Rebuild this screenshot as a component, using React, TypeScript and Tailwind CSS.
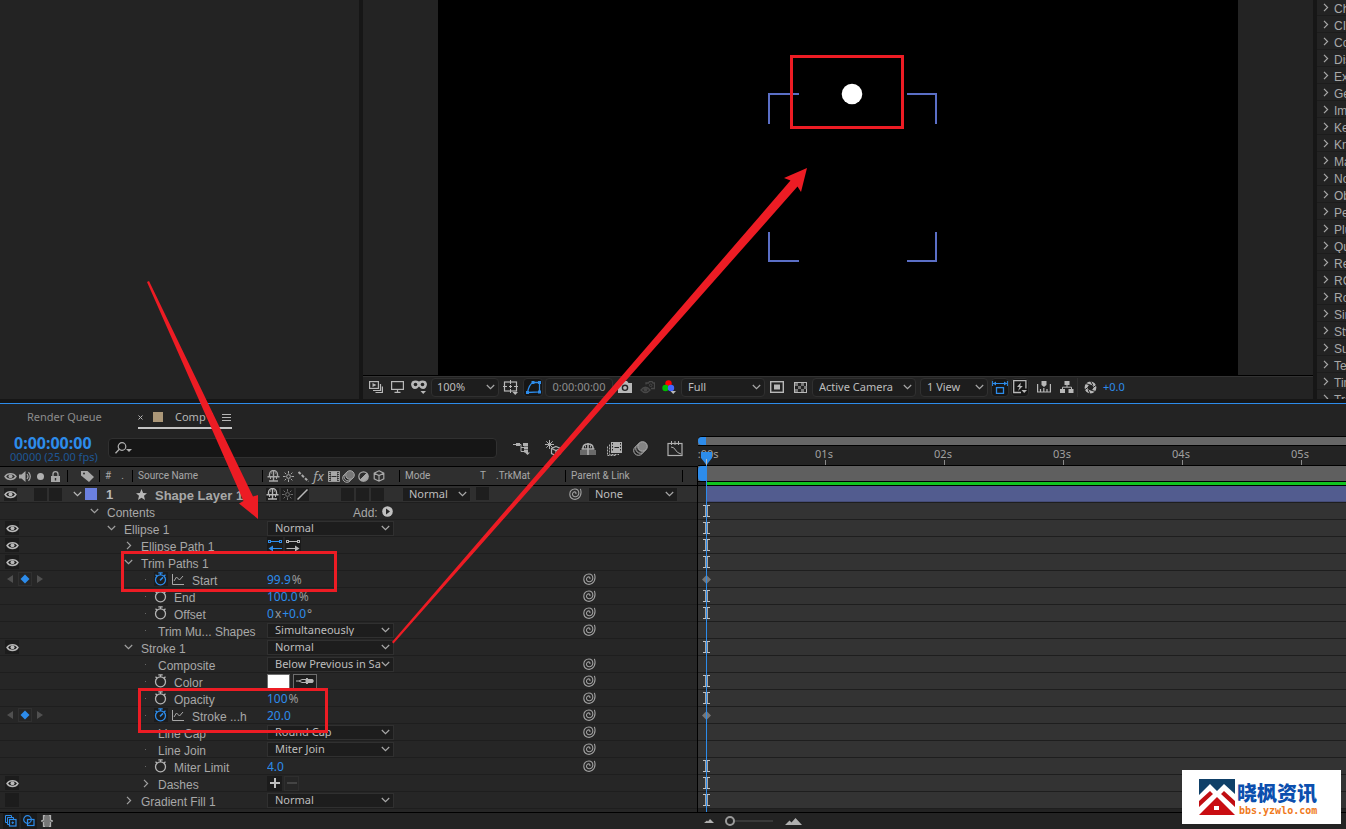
import { useState } from 'react'
import type { ReactNode } from 'react'
import clsx from 'clsx'

interface Row {
  label: string
  level: number
  kind: 'group' | 'prop'
  open?: boolean
  eye?: boolean | 'off'
  watch?: boolean
  animated?: boolean
  whip?: boolean
  mark?: 'beam' | 'key'
  value?: ReactNode
}

const effects = [
  'Channel',
  'CINEMA 4D',
  'Color Correction',
  'Distort',
  'Expression Controls',
  'Generate',
  'Immersive Video',
  'Keying',
  'Knoll',
  'Matte',
  'Noise & Grain',
  'Obsolete',
  'Perspective',
  'Plugins',
  'Quick Tools',
  'Red Giant',
  'RG Magic Bullet',
  'Rowbyte',
  'Simulation',
  'Stylize',
  'Superluminal',
  'Text',
  'Time',
  'Transition',
]

const seconds = ['0:00s', '01s', '02s', '03s', '04s', '05s', '06s']

const indent = ['pl-0', 'pl-[17px]', 'pl-[34px]', 'pl-[51px]']

/* ---------- small pieces ---------- */

function Svg({ w, h, children, className }: { w: number; h: number; children: ReactNode; className?: string }) {
  return (
    <svg
      width={w}
      height={h}
      viewBox={`0 0 ${w} ${h}`}
      fill="none"
      stroke="currentColor"
      className={clsx('shrink-0', className)}
      aria-hidden="true"
    >
      {children}
    </svg>
  )
}

function Chevron({ open = true }: { open?: boolean }) {
  return open ? (
    <Svg w={9} h={6}>
      <path d="M.8 1l3.7 3.6L8.2 1" strokeWidth="1.2" />
    </Svg>
  ) : (
    <Svg w={6} h={9}>
      <path d="M1 .8l3.6 3.7L1 8.2" strokeWidth="1.2" />
    </Svg>
  )
}

function Eye() {
  return (
    <Svg w={13} h={9}>
      <path d="M1 4.5C3.5 0.6 9.5 0.6 12 4.5C9.5 8.4 3.5 8.4 1 4.5Z" strokeWidth="1.4" />
      <circle cx="6.5" cy="4.3" r="2" fill="currentColor" stroke="none" />
    </Svg>
  )
}

function Spiral() {
  return (
    <Svg w={13} h={12}>
      <path
        d="M11.4 .8C12.4 4 12 8.2 9.2 10.3C6.2 12.4 1 11.2 .8 6.4C.7 3 3 1 5.9 1C8.4 1 9.9 2.9 9.8 5.2C9.7 7.5 8 8.8 6.2 8.7C4.4 8.6 3.4 7.4 3.5 6C3.6 4.5 4.8 3.7 5.9 3.9C6.9 4.1 7.2 5 6.8 6.2"
        strokeWidth="1.1"
      />
    </Svg>
  )
}

function Stopwatch({ active }: { active?: boolean }) {
  return (
    <Svg w={13} h={14}>
      <circle cx="6.5" cy="7.8" r="5" strokeWidth="1.3" />
      <path d="M4.3 .9h4.400M6.500 1v2M1.500 2.800l1.500 1.200M11.500 2.800L10 4" strokeWidth="1.300" />
      {active && <path d="M6 8.400L9 5.400" strokeWidth="1.500" />}
    </Svg>
  )
}

function Shy() {
  return (
    <Svg w={13} h={12}>
      <path d="M2.500 6.500V4.500a4 4 0 0 1 8 0v2" strokeWidth="1.400" />
      <path d="M.5 6.700h12M6.500 1v10M2 11h9" strokeWidth="1.400" />
      <path d="M4.500 2.500v1M8.500 2.500v1M3.500 7v2M9.500 7v2" />
    </Svg>
  )
}

function Sun() {
  return (
    <Svg w={11} h={11}>
      <circle cx="5.5" cy="5.5" r="1.9" />
      <path d="M5.5 0v2.6M5.5 8.4V11M0 5.5h2.6M8.4 5.5H11M1.6 1.6l1.6 1.6M7.8 7.8l1.6 1.6M9.4 1.6L7.8 3.2M3.2 7.8L1.6 9.4" />
    </Svg>
  )
}

function Film() {
  return (
    <Svg w={12} h={11}>
      <rect x=".6" y=".6" width="10.8" height="9.8" />
      <rect x="3" y="1" width="6" height="9" fill="currentColor" stroke="none" />
      <path d="M1 2.5h1.5M1 4.5h1.5M1 6.5h1.5M1 8.5h1.5M9.5 2.5H11M9.5 4.5H11M9.5 6.5H11M9.5 8.5H11" />
      <path d="M3.5 5.5h5" stroke="#2f2f2f" />
    </Svg>
  )
}

function Blur() {
  return (
    <Svg w={13} h={13}>
      <circle cx="5" cy="8" r="4.3" />
      <circle cx="6.3" cy="6.6" r="4.3" fill="#2f2f2f" />
      <circle cx="8" cy="5" r="4.3" fill="#777" />
    </Svg>
  )
}

function Cube() {
  return (
    <Svg w={12} h={12}>
      <path d="M6 .8l4.8 2.4v5.6L6 11.2 1.2 8.8V3.2zM1.2 3.2L6 5.6l4.8-2.4M6 5.6v5.6" strokeWidth="1.2" />
    </Svg>
  )
}

function Drop({ label, options, width, className }: { label: string; options: string[]; width: string; className?: string }) {
  return (
    <div className={clsx('relative shrink-0', width)}>
      <select
        aria-label={label}
        className={clsx(
          'block w-full appearance-none overflow-hidden border border-[#303030] bg-[#1d1d1d] pr-3 text-[11px] leading-3 text-[#bdbdbd] outline-none',
          className,
        )}
      >
        {options.map((o) => (
          <option key={o}>{o}</option>
        ))}
      </select>
      <span className="pointer-events-none absolute inset-y-0 right-1 flex items-center text-[#a8a8a8]">
        <Chevron />
      </span>
    </div>
  )
}

function RowDrop({ label, options }: { label: string; options: string[] }) {
  return <Drop label={label} options={options} width="w-[127px]" className="h-[15px] pl-[7px]" />
}

function Num({ label, value, unit }: { label: string; value: string; unit?: string }) {
  const [v, setV] = useState(value)
  return (
    <label className="flex items-center gap-px pt-px text-[12px] leading-4 text-[#9a9a9a]">
      <input
        aria-label={label}
        value={v}
        onChange={(e) => setV(e.target.value)}
        className="field-sizing-content h-4 bg-transparent text-[#2d8ceb] outline-none"
      />
      {unit}
    </label>
  )
}

function Sep() {
  return <i className="h-3 w-px shrink-0 bg-black" />
}

function Slot({ w, children }: { w: string; children: ReactNode }) {
  return <span className={clsx('flex shrink-0 items-center justify-center', w)}>{children}</span>
}

function ToolButton({ label, w, active, children }: { label: string; w: string; active?: boolean; children: ReactNode }) {
  return (
    <button
      type="button"
      aria-label={label}
      className={clsx(
        'flex h-[19px] shrink-0 items-center justify-center',
        w,
        active && 'rounded-sm border border-[#2e2e2e] bg-[#161616]',
      )}
    >
      {children}
    </button>
  )
}

/* ---------- layer properties ---------- */

const rows: Row[] = [
  {
    label: 'Contents',
    level: 0,
    kind: 'group',
    open: true,
    mark: 'beam',
    value: (
      <button
        type="button"
        className="ml-[86px] flex items-center gap-1 font-['Liberation_Sans',sans-serif] text-[12px] leading-[14px] text-[#a8a8a8]"
      >
        <span className="pt-[3px]">Add:</span>
        <Svg w={11} h={11} className="text-[#c0c0c0]">
          <circle cx="5.5" cy="5.5" r="5.3" fill="currentColor" stroke="none" />
          <path d="M4 2.6v5.8L8 5.5z" fill="#262626" stroke="none" />
        </Svg>
      </button>
    ),
  },
  {
    label: 'Ellipse 1',
    level: 1,
    kind: 'group',
    open: true,
    eye: true,
    mark: 'beam',
    value: <RowDrop label="Ellipse mode" options={['Normal', 'Multiply', 'Screen']} />,
  },
  {
    label: 'Ellipse Path 1',
    level: 2,
    kind: 'group',
    open: false,
    eye: true,
    mark: 'beam',
    value: (
      <div className="flex gap-0.5">
        <button type="button" aria-label="Path direction normal" className="h-4 w-4 bg-[#1a1a1a] text-[#2d8ceb]">
          <Svg w={16} h={13}>
            <path d="M3 2.5h10M3 9.5h12" />
            <path d="M6 6.500L1.500 9.500 6 12.500z" fill="currentColor" stroke="none" />
            <rect x="1.5" y="1.5" width="2" height="2" />
            <rect x="12.5" y="1.5" width="2" height="2" />
          </Svg>
        </button>
        <button type="button" aria-label="Path direction reversed" className="h-4 w-4 bg-[#1a1a1a] text-[#b5b5b5]">
          <Svg w={16} h={13}>
            <path d="M3 2.5h10M1.5 9.5H13" />
            <path d="M10 6.500l4.500 3-4.500 3z" fill="currentColor" stroke="none" />
            <rect x="1.5" y="1.5" width="2" height="2" />
            <rect x="12.5" y="1.5" width="2" height="2" />
          </Svg>
        </button>
      </div>
    ),
  },
  { label: 'Trim Paths 1', level: 2, kind: 'group', open: true, eye: true, mark: 'beam' },
  {
    label: 'Start',
    level: 3,
    kind: 'prop',
    watch: true,
    animated: true,
    whip: true,
    mark: 'key',
    value: <Num label="Start" value="99.9" unit="%" />,
  },
  {
    label: 'End',
    level: 3,
    kind: 'prop',
    watch: true,
    whip: true,
    mark: 'beam',
    value: <Num label="End" value="100.0" unit="%" />,
  },
  {
    label: 'Offset',
    level: 3,
    kind: 'prop',
    watch: true,
    whip: true,
    mark: 'beam',
    value: (
      <div className="flex gap-px">
        <Num label="Offset turns" value="0" unit="x" />
        <Num label="Offset degrees" value="+0.0" unit="°" />
      </div>
    ),
  },
  {
    label: 'Trim Mu... Shapes',
    level: 3,
    kind: 'prop',
    whip: true,
    value: <RowDrop label="Trim Multiple Shapes" options={['Simultaneously', 'Individually']} />,
  },
  {
    label: 'Stroke 1',
    level: 2,
    kind: 'group',
    open: true,
    eye: true,
    mark: 'beam',
    value: <RowDrop label="Stroke mode" options={['Normal', 'Multiply', 'Screen']} />,
  },
  {
    label: 'Composite',
    level: 3,
    kind: 'prop',
    whip: true,
    value: <RowDrop label="Composite" options={['Below Previous in Sa', 'Above Previous in Sa']} />,
  },
  {
    label: 'Color',
    level: 3,
    kind: 'prop',
    watch: true,
    whip: true,
    mark: 'beam',
    value: (
      <div className="flex gap-[3px]">
        <button type="button" aria-label="Stroke color" className="h-[15px] w-[23px] border border-[#6e6e6e] bg-white" />
        <button
          type="button"
          aria-label="Pick color"
          className="flex h-[15px] w-6 items-center justify-center border border-[#6e6e6e] bg-[#1d1d1d] text-[#b5b5b5]"
        >
          <Svg w={20} h={8}>
            <path d="M1 4h3M4 4l3-1.5h4v3H7z" />
            <path d="M11 1h2v1h4.500Q20 4 17.500 6H13v1h-2z" fill="currentColor" stroke="none" />
          </Svg>
        </button>
      </div>
    ),
  },
  {
    label: 'Opacity',
    level: 3,
    kind: 'prop',
    watch: true,
    whip: true,
    mark: 'beam',
    value: <Num label="Opacity" value="100" unit="%" />,
  },
  {
    label: 'Stroke ...h',
    level: 3,
    kind: 'prop',
    watch: true,
    animated: true,
    whip: true,
    mark: 'key',
    value: <Num label="Stroke Width" value="20.0" />,
  },
  {
    label: 'Line Cap',
    level: 3,
    kind: 'prop',
    whip: true,
    value: <RowDrop label="Line Cap" options={['Round Cap', 'Butt Cap', 'Projecting Cap']} />,
  },
  {
    label: 'Line Join',
    level: 3,
    kind: 'prop',
    whip: true,
    value: <RowDrop label="Line Join" options={['Miter Join', 'Round Join', 'Bevel Join']} />,
  },
  {
    label: 'Miter Limit',
    level: 3,
    kind: 'prop',
    watch: true,
    whip: true,
    mark: 'beam',
    value: <Num label="Miter Limit" value="4.0" />,
  },
  {
    label: 'Dashes',
    level: 3,
    kind: 'group',
    open: false,
    eye: true,
    mark: 'beam',
    value: (
      <div className="flex gap-0.5">
        <button type="button" aria-label="Add dash" className="flex h-[15px] w-[15px] items-center justify-center bg-[#1b1b1b] text-[#c0c0c0]">
          <Svg w={10} h={10}>
            <path d="M5 0v10M0 5h10" strokeWidth="2" />
          </Svg>
        </button>
        <button
          type="button"
          aria-label="Remove dash"
          className="flex h-[15px] w-[15px] items-center justify-center border border-[#2e2e2e] text-[#444]"
        >
          <Svg w={10} h={10}>
            <path d="M0 5h10" strokeWidth="2" />
          </Svg>
        </button>
      </div>
    ),
  },
  {
    label: 'Gradient Fill 1',
    level: 2,
    kind: 'group',
    open: false,
    eye: 'off',
    mark: 'beam',
    value: <RowDrop label="Gradient mode" options={['Normal', 'Multiply', 'Screen']} />,
  },
]

function PropertyRow({ row }: { row: Row }) {
  return (
    <div className="flex h-[17px] items-center border-b border-[#1e1e1e] bg-[#262626]">
      <div className="flex w-[88px] shrink-0 items-center pl-[5px]">
        {row.eye && (
          <button
            type="button"
            aria-label={`Toggle ${row.label}`}
            className="flex h-[14px] w-[14px] items-center justify-center bg-[#1c1c1c] text-[#b8b8b8]"
          >
            {row.eye === true && <Eye />}
          </button>
        )}
        {row.animated && (
          <div className="flex items-center gap-1 pl-px text-[#505050]">
            <Svg w={8} h={8}>
              <path d="M7 0v8L1 4z" fill="currentColor" stroke="none" />
            </Svg>
            <span className="flex h-[14px] w-[14px] items-center justify-center border border-[#303030] text-[#2d8ceb]">
              <Svg w={10} h={10}>
                <path d="M5 .5L9.500 5 5 9.500.5 5z" fill="currentColor" stroke="none" />
              </Svg>
            </span>
            <Svg w={8} h={8}>
              <path d="M1 0v8l6-4z" fill="currentColor" stroke="none" />
            </Svg>
          </div>
        )}
      </div>
      <div className={clsx('flex w-[179px] shrink-0 items-center', indent[row.level])}>
        <span className="flex w-[13px] shrink-0 items-center justify-center text-[#a0a0a0]">
          {row.kind === 'group' ? <Chevron open={row.open} /> : <i className="h-px w-px bg-[#666]" />}
        </span>
        {row.watch && (
          <span className={clsx('ml-0.5 w-[14px] shrink-0', row.animated ? 'bg-[#1c1c1c] text-[#2d8ceb]' : 'text-[#b5b5b5]')}>
            <Stopwatch active={row.animated} />
          </span>
        )}
        {row.animated && (
          <Svg w={12} h={11} className="ml-1 text-[#a8a8a8]">
            <path d="M.5 0v10.500H12M2 7l2.500-4 3 3L11 2" />
          </Svg>
        )}
        <span
          className={clsx(
            "whitespace-nowrap pt-[3px] font-['Liberation_Sans',sans-serif] text-[12px] leading-[14px] text-[#a8a8a8]",
            row.animated ? 'ml-2' : 'ml-1.5',
          )}
        >
          {row.label}
        </span>
      </div>
      <div className="w-[316px] shrink-0">{row.value}</div>
      {row.whip && (
        <span className="text-[#a0a0a0]">
          <Spiral />
        </span>
      )}
    </div>
  )
}

function TrackRow({ mark }: { mark?: 'beam' | 'key' }) {
  return (
    <div className="flex h-[17px] items-center border-b border-[#1e1e1e] bg-[#333333] pl-1">
      {mark === 'beam' && (
        <Svg w={9} h={12}>
          <path d="M1 .5h7M1 11.500h7" stroke="#c0c0c0" />
          <path d="M4.500 1v10" stroke="#a8a8a8" strokeWidth="3" />
        </Svg>
      )}
      {mark === 'key' && (
        <Svg w={9} h={9}>
          <path d="M4.500 0l4.500 4.500-4.500 4.500L0 4.500z" fill="#777" stroke="none" />
        </Svg>
      )}
    </div>
  )
}

/* ---------- viewer ---------- */

function Viewer() {
  return (
    <section className="flex min-w-0 flex-1 flex-col bg-[#232323]">
      <div className="flex flex-1 justify-center border-b border-black">
        <svg viewBox="0 0 800 375" className="h-[375px] w-[800px] bg-black" aria-label="Composition preview">
          <g fill="none" stroke="#5b6fc6" strokeWidth="2">
            <path d="M331 124V94H361M469 94H498V124M331 232V261H361M469 261H498V232" />
          </g>
          <circle cx="414" cy="94" r="10.300" fill="#fff" />
        </svg>
      </div>
      <div className="flex h-6 items-center border-t border-[#333] pb-0.5 pl-1 text-[#b8b8b8]">
        <Slot w="w-[18px]">
          <Svg w={14} h={12}>
            <rect x=".6" y=".6" width="8.800" height="6.800" strokeWidth="1.200" />
            <path d="M3.500 2v4L7.500 4z" fill="currentColor" stroke="none" />
            <path d="M11.500 3v6.500H4M13.400 5.500v6H6.500" strokeWidth="1.200" />
          </Svg>
        </Slot>
        <Slot w="w-6">
          <Svg w={13} h={12}>
            <rect x=".6" y=".6" width="11.800" height="7.800" strokeWidth="1.200" />
            <path d="M6.500 8.500v2.500M3.500 11.400h6" strokeWidth="1.200" />
          </Svg>
        </Slot>
        <Slot w="w-5">
          <Svg w={16} h={14}>
            <path
              d="M1 1.500Q4.500-.3 8 1.500Q11.500-.3 15 1.500L16 4Q15.500 9 12 9Q10 9 8 6.500Q6 9 4 9Q.5 9 0 4z"
              fill="currentColor"
              stroke="none"
            />
            <circle cx="4.500" cy="4.500" r="1.800" fill="#232323" stroke="none" />
            <circle cx="11.500" cy="4.500" r="1.800" fill="#232323" stroke="none" />
            <path d="M9.500 11h5.500L12.200 14z" fill="currentColor" stroke="none" />
          </Svg>
        </Slot>
        <div className="ml-0.5">
          <Drop label="Magnification" options={['100%', '50%', '25%']} width="w-[68px]" className="h-[19px] rounded-sm pl-[5px]" />
        </div>
        <Slot w="w-6">
          <Svg w={16} h={15}>
            <rect x="1.500" y="2" width="12" height="9" strokeWidth="1.200" />
            <path d="M7.500 0v4M7.500 9v4M0 6.500h4M11 6.500h4M7.500 5v3M6 6.500h3" />
            <path d="M9.500 12h5.500L12.200 15z" fill="currentColor" stroke="none" />
          </Svg>
        </Slot>
        <ToolButton label="Toggle mask and shape path visibility" w="w-5" active>
          <Svg w={15} h={13} className="text-[#2d8ceb]">
            <path d="M1.500 11.500Q3 3.500 7 1.500H13.500v9.500z" strokeWidth="1.300" />
            <path d="M0 10h3v3H0zM5.500 0h3v3h-3zM12 0h3v3h-3zM12 9.500h3v3h-3z" fill="currentColor" stroke="none" />
          </Svg>
        </ToolButton>
        <button
          type="button"
          className="ml-0.5 h-[19px] w-[68px] shrink-0 rounded-sm border border-[#303030] bg-[#1f1f1f] text-[11px] leading-4 text-[#8e8e8e]"
        >
          0:00:00:00
        </button>
        <Slot w="w-6">
          <Svg w={14} h={12}>
            <path d="M0 2h3.500L5 0h4l1.500 2H14v10H0z" fill="currentColor" stroke="none" />
            <circle cx="7" cy="6.800" r="2.600" stroke="#232323" strokeWidth="1.400" />
          </Svg>
        </Slot>
        <Slot w="w-5">
          <Svg w={15} h={13} className="text-[#484848]">
            <path d="M1 9Q5.500 3.500 10 9Q5.500 14 1 9z" strokeWidth="1.300" />
            <circle cx="5.500" cy="8.500" r="1.600" fill="currentColor" />
            <path d="M6 3.500V2h2.500l1-1.500h2.500L13 2h1.500v5.500H11" strokeWidth="1.300" />
            <circle cx="10.700" cy="4.300" r="1.300" />
          </Svg>
        </Slot>
        <Slot w="w-6">
          <Svg w={14} h={14}>
            <circle cx="6.500" cy="3.500" r="3.200" fill="#f00" stroke="none" />
            <circle cx="3.500" cy="8" r="3.200" fill="#0b0" stroke="none" />
            <circle cx="9" cy="8" r="3.200" fill="#46f" stroke="none" />
            <path d="M8.500 11H14l-2.800 3z" fill="currentColor" stroke="none" />
          </Svg>
        </Slot>
        <Drop label="Resolution" options={['Full', 'Half', 'Third', 'Quarter']} width="w-[84px]" className="h-[19px] rounded-sm pl-1.5" />
        <Slot w="w-6">
          <Svg w={14} h={12}>
            <rect x=".7" y=".7" width="12.600" height="10.600" strokeWidth="1.400" />
            <rect x="4" y="3.500" width="6" height="5" fill="currentColor" stroke="none" />
          </Svg>
        </Slot>
        <Slot w="w-[22px]">
          <Svg w={13} h={11}>
            <rect x=".5" y=".5" width="12" height="10" />
            <path d="M1 1h3v3H1zM7 1h3v3H7zM4 4h3v3H4zM10 4h2.500v3H10zM1 7h3v3H1zM7 7h3v3H7z" fill="#777" stroke="none" />
          </Svg>
        </Slot>
        <div className="ml-px flex gap-1">
          <Drop label="3D view" options={['Active Camera', 'Front', 'Left', 'Top']} width="w-[104px]" className="h-[19px] rounded-sm pl-1.5" />
          <Drop label="View layout" options={['1 View', '2 Views', '4 Views']} width="w-[68px]" className="h-[19px] rounded-sm pl-1.5" />
        </div>
        <div className="ml-[3px] flex gap-0.5">
          <ToolButton label="Pixel aspect ratio correction" w="w-[18px]" active>
            <Svg w={16} h={13} className="text-[#2d8ceb]">
              <path d="M1 2.500h14M.6 0v5M15.400 0v5" />
              <path d="M1 2.500L4 .5v4zM15 2.500l-3-2v4z" fill="currentColor" stroke="none" />
              <rect x="4.500" y="6.600" width="7" height="5.800" strokeWidth="1.300" />
            </Svg>
          </ToolButton>
          <ToolButton label="Fast previews" w="w-[18px]" active>
            <Svg w={14} h={14}>
              <path d="M8 12.500H.7V.7h12.200V8.500" strokeWidth="1.300" />
              <path d="M7.800 2.500L4 7h2.500L5 11l4.800-5H7.300z" fill="currentColor" stroke="none" />
              <path d="M8.500 10H14L11.200 13z" fill="currentColor" stroke="none" />
            </Svg>
          </ToolButton>
        </div>
        <Slot w="w-[30px]">
          <Svg w={14} h={12}>
            <path d="M.6 3v8h12.800V3M3.500 8v3M6.800 7v4M10 8v3" strokeWidth="1.200" />
            <path d="M4.500 0h5v4L7 6 4.500 4z" fill="currentColor" stroke="none" />
          </Svg>
        </Slot>
        <Slot w="w-4">
          <Svg w={14} h={12}>
            <path d="M7 3v3M2.500 9V6.200h9V9" />
            <path d="M4.500 0h5v4h-5zM0 8h5v4H0zM8.500 8h5v4h-5z" fill="currentColor" stroke="none" />
          </Svg>
        </Slot>
        <i className="ml-0.5 h-[19px] w-px bg-[#303030]" />
        <Slot w="w-6">
          <Svg w={13} h={13}>
            <circle cx="6.500" cy="6.500" r="4.300" strokeWidth="3.200" />
            <path
              d="M6.500 0L9 4.500M12.500 4L8.500 7M11.500 10.500L6.500 9M6 13L4 8.500M.5 9L4.500 6M1.500 2.500L6.500 4"
              stroke="#232323"
            />
          </Svg>
        </Slot>
        <button type="button" className="ml-px text-[11px] leading-4 text-[#2d8ceb]">
          +0.0
        </button>
      </div>
    </section>
  )
}

function EffectsList() {
  return (
    <aside className="h-full w-[29px] shrink-0 overflow-hidden bg-[#232323]">
      <ul className="-mt-px">
        {effects.map((name) => (
          <li
            key={name}
            className="flex h-[17px] items-center gap-[5px] overflow-hidden whitespace-nowrap border-b border-[#1c1c1c] pl-1.5 font-['Liberation_Sans',sans-serif] text-[12px] leading-[14px] text-[#a8a8a8]"
          >
            <Chevron open={false} />
            <span className="pt-[3px]">{name}</span>
          </li>
        ))}
      </ul>
    </aside>
  )
}

/* ---------- timeline ---------- */

function TimelineControls() {
  return (
    <div className="flex h-[35px] items-start">
      <div className="w-[108px] shrink-0 pl-2.5 pt-1">
        <div className="pl-1 text-[16px] font-bold leading-4 text-[#2d8ceb]">0:00:00:00</div>
        <div className="whitespace-nowrap text-[11px] leading-3 text-[#1e5796]">00000 (25.00 fps)</div>
      </div>
      <label className="mt-[7px] flex h-5 w-[389px] shrink-0 items-center rounded-sm border border-[#303030] bg-[#161616] pl-1.5 text-[#b0b0b0]">
        <Svg w={17} h={12}>
          <circle cx="7" cy="4.500" r="3.800" strokeWidth="1.200" />
          <path d="M4.300 7.300L.5 11.300" strokeWidth="1.300" />
          <path d="M11 7h6l-3 3z" fill="currentColor" stroke="none" />
        </Svg>
        <input type="search" aria-label="Search layers" className="h-4 min-w-0 flex-1 bg-transparent text-[11px] outline-none" />
      </label>
      <div className="ml-3 flex h-[35px] items-center text-[#b0b0b0]">
        <button type="button" aria-label="Composition mini-flowchart" className="mr-2 flex w-6 justify-center">
          <Svg w={17} h={13}>
            <path d="M0 2.500h8M8 2.500v7h4M8 5.500h4" />
            <path d="M3 1h4v3H3zM10 1h5v3h-5zM11 4.500h4v3h-4zM11 8h4v2.500h-4zM12 10.500h5L14.500 13z" fill="currentColor" stroke="none" />
          </Svg>
        </button>
        <button type="button" aria-label="Draft 3D" className="mr-[11px] flex w-6 justify-center">
          <Svg w={17} h={17}>
            <path d="M4.500 0v9M0 4.500h9M1.300 1.300l6.400 6.400M7.700 1.300L1.300 7.700" />
            <circle cx="4.500" cy="4.500" r="1.800" fill="currentColor" stroke="none" />
            <path d="M11 6.500l4.500 2v5l-4.500 2-4.500-2v-5zM6.500 8.500l4.500 2 4.500-2M11 10.500v5" strokeWidth="1.200" />
          </Svg>
        </button>
        <button type="button" aria-label="Hide shy layers" className="mr-0.5 flex w-6 justify-center">
          <Svg w={16} h={13}>
            <path d="M0 8h16v5H0z" fill="#6a6a6a" stroke="none" />
            <path d="M3 7V5.500Q3.500 2 8 2T13 5.500V7" strokeWidth="1.600" />
            <path d="M8 1v12M1.500 7h13" strokeWidth="1.600" />
            <path d="M5.500 3.500v2M10.500 3.500v2" />
          </Svg>
        </button>
        <button type="button" aria-label="Frame blending" className="mr-0.5 flex w-6 justify-center">
          <Svg w={15} h={14}>
            <path d="M4 0h11v11H4z" fill="currentColor" stroke="none" />
            <path d="M5.500 1v9M13.500 1v9" stroke="#232323" strokeDasharray="1.500 1.500" />
            <path d="M7.500 5.500h4.500" stroke="#232323" />
            <path d="M2.500 2.500v10H12M.5 4.500v9h9" strokeDasharray="2 1" />
          </Svg>
        </button>
        <button type="button" aria-label="Motion blur" className="mr-[11px] flex w-6 justify-center">
          <Svg w={15} h={15}>
            <circle cx="5.500" cy="9.500" r="4.800" />
            <circle cx="7.500" cy="7.500" r="4.800" fill="#333" />
            <circle cx="9.500" cy="5.500" r="4.800" fill="#858585" />
          </Svg>
        </button>
        <button type="button" aria-label="Graph editor" className="flex w-6 justify-center">
          <Svg w={16} h={16}>
            <rect x="1" y="2.500" width="14" height="12" strokeWidth="1.200" />
            <path d="M4.500 0v4M8 0v4M11.500 0v4M4 6Q7 6 8.500 9T14 13" />
          </Svg>
        </button>
      </div>
    </div>
  )
}

function ColumnHeader() {
  return (
    <div className="flex h-5 items-center border-y border-black bg-[#2f2f2f] pl-[3px] font-[Roboto,sans-serif] text-[10px] leading-3 text-[#a8a8a8]">
      <Slot w="w-[15px]">
        <Eye />
      </Slot>
      <Slot w="w-[15px]">
        <Svg w={13} h={11}>
          <path d="M0 3.500h2.500L6.500 0v11L2.500 7.500H0z" fill="currentColor" stroke="none" />
          <path d="M8 3q2 2.500 0 5M9.500 1.200q3.600 4.300 0 8.600" strokeWidth="1.200" />
        </Svg>
      </Slot>
      <Slot w="w-[15px]">
        <i className="h-[7px] w-[7px] rounded-full bg-[#b0b0b0]" />
      </Slot>
      <Slot w="w-[15px]">
        <Svg w={9} h={11}>
          <path d="M0 5h9v6H0z" fill="currentColor" stroke="none" />
          <path d="M2 5V3q0-2.300 2.500-2.300T7 3v2" strokeWidth="1.300" />
          <path d="M4.500 7v2.500" stroke="#2f2f2f" strokeWidth="1.400" />
        </Svg>
      </Slot>
      <span className="w-1" />
      <Sep />
      <span className="flex w-[31px] shrink-0 pl-[13px]">
        <Svg w={13} h={12}>
          <path d="M0 1h6.500L13 7l-5 5L0 5.500z" fill="currentColor" stroke="none" />
          <circle cx="3" cy="3.500" r="1" fill="#2f2f2f" stroke="none" />
        </Svg>
      </span>
      <Sep />
      <span className="flex w-8 shrink-0 gap-2.5 pl-[5px]">
        <span>#</span>
        <span>.</span>
      </span>
      <Sep />
      <span className="w-[129px] shrink-0 pl-[5px]">Source Name</span>
      <Sep />
      <span className="flex w-[136px] shrink-0 items-center pl-[3px]">
        <Slot w="w-[15px]">
          <Shy />
        </Slot>
        <Slot w="w-[15px]">
          <Sun />
        </Slot>
        <Slot w="w-[15px]">
          <Svg w={11} h={11}>
            <path d="M.5 1l10 9.500" strokeWidth="2" strokeDasharray="3 1.500" />
          </Svg>
        </Slot>
        <Slot w="w-[15px]">
          <span className="font-['Noto_Sans',sans-serif] text-[13px] italic leading-4">fx</span>
        </Slot>
        <Slot w="w-[15px]">
          <Film />
        </Slot>
        <Slot w="w-[15px]">
          <Blur />
        </Slot>
        <Slot w="w-[15px]">
          <Svg w={11} h={11}>
            <circle cx="5.500" cy="5.500" r="4.700" strokeWidth="1.200" />
            <path d="M8.800 2.200A4.700 4.700 0 0 1 2.200 8.800z" fill="currentColor" />
          </Svg>
        </Slot>
        <Slot w="w-[15px]">
          <Cube />
        </Slot>
      </span>
      <Sep />
      <span className="w-20 shrink-0 pl-[5px]">Mode</span>
      <span className="w-4 shrink-0">T</span>
      <span className="w-[69px] shrink-0">.TrkMat</span>
      <Sep />
      <span className="w-[116px] shrink-0 pl-[5px]">Parent &amp; Link</span>
      <Sep />
    </div>
  )
}

function LayerRow() {
  const box = 'flex h-[13px] w-[13px] shrink-0 items-center justify-center bg-[#1e1e1e]'
  return (
    <div className="flex h-[17px] items-center border-b border-[#1e1e1e] bg-[#2f2f2f] pl-1 text-[#b8b8b8]">
      <button type="button" aria-label="Toggle layer" className={box}>
        <Eye />
      </button>
      <div className="ml-[17px] flex gap-0.5">
        <span className={box} />
        <span className={box} />
      </div>
      <span className="ml-[11px]">
        <Chevron />
      </span>
      <span className="ml-[3px] h-3 w-3 shrink-0 bg-[#6b80e0]" />
      <span className="w-[39px] shrink-0 pl-[9px] pt-0.5 font-['Liberation_Sans',sans-serif] text-[13px] font-bold leading-[14px]">1</span>
      <Svg w={11} h={11}>
        <path d="M5.500 0l1.600 3.900 3.900.3-3 2.600 1 4.200-3.500-2.300L2 11l1-4.200-3-2.600 3.900-.3z" fill="currentColor" stroke="none" />
      </Svg>
      <span className="ml-2 w-[111px] shrink-0 whitespace-nowrap pt-[3px] font-['Liberation_Sans',sans-serif] text-[13px] font-bold leading-[14px] text-[#a8a8a8]">
        Shape Layer 1
      </span>
      <div className="flex gap-0.5">
        <span className={box}>
          <Shy />
        </span>
        <span className={clsx(box, 'text-[#6e6e6e]')}>
          <Sun />
        </span>
        <span className={box}>
          <Svg w={11} h={11}>
            <path d="M.5 10.500l10-10" strokeWidth="1.500" />
          </Svg>
        </span>
      </div>
      <div className="ml-8 flex gap-0.5">
        <span className={box} />
        <span className={box} />
        <span className={box} />
      </div>
      <div className="ml-[18px] flex gap-[5px]">
        <Drop label="Blend mode" options={['Normal', 'Multiply', 'Screen']} width="w-[69px]" className="h-[15px] pl-1.5" />
        <span className={box} />
      </div>
      <span className="ml-20 text-[#a0a0a0]">
        <Spiral />
      </span>
      <div className="ml-1.5">
        <Drop label="Parent" options={['None', 'Null 1']} width="w-[90px]" className="h-[15px] pl-1.5" />
      </div>
    </div>
  )
}

function Tracks() {
  return (
    <div className="relative min-w-0 flex-1 overflow-hidden pt-8">
      <div className="flex h-[10px] rounded-tl-sm border-y border-black bg-[#666]">
        <i className="h-2 w-2 rounded-l-full bg-[#2d8ceb]" />
      </div>
      <div className="h-5 overflow-hidden border-b border-black">
        <ol className="-ml-[51px] flex text-[11px] leading-4 text-[#a0a0a0]">
          {seconds.map((s) => (
            <li key={s} className="flex w-[119px] shrink-0 flex-col items-center">
              <span className="h-[14px] pr-[3px]">{s}</span>
              <i className="h-[5px] w-px bg-[#8a8a8a]" />
            </li>
          ))}
        </ol>
      </div>
      <div className="flex h-4 border-b border-black bg-[#5f5f5f]">
        <i className="h-[15px] w-2 rounded-l-sm bg-[#2d8ceb]" />
      </div>
      <div className="flex h-1 border-b border-black pl-[9px]">
        <i className="flex-1 bg-[#10c41f]" />
      </div>
      <div className="flex h-[17px] border-b border-[#1e1e1e] bg-[#333] pl-[9px]">
        <i className="flex-1 border-b border-[#454c78] bg-[#525c8f]" />
      </div>
      {rows.map((row) => (
        <TrackRow key={row.label} mark={row.mark} />
      ))}
      {/* current time indicator */}
      <div className="pointer-events-none absolute bottom-0 left-0.5 top-12 flex w-[13px] flex-col items-center text-[#2d8ceb]">
        <Svg w={13} h={13}>
          <path d="M1 0h11v6L6.500 13 1 6z" fill="currentColor" stroke="none" />
          <path d="M6.500 7v6" stroke="#bbb" />
        </Svg>
        <i className="w-px flex-1 bg-[#2d8ceb]" />
      </div>
    </div>
  )
}

function Timeline() {
  return (
    <section className="flex flex-1 border-t border-[#2d8ceb] bg-[#232323]">
      <div className="flex w-[698px] shrink-0 flex-col">
        <nav className="flex h-[27px] items-start pl-[27px] text-[11px] leading-4 text-[#8c8c8c]">
          <button type="button" className="mt-[5px] w-[111px] text-left">
            Render Queue
          </button>
          <div className="flex h-[25px] w-[94px] items-center border-b-2 border-[#c4c4c4] pt-[3px] text-[#b5b5b5]">
            <button type="button" aria-label="Close tab" className="w-[15px] shrink-0">
              <Svg w={5} h={5}>
                <path d="M.5.5l4 4M4.500.5l-4 4" />
              </Svg>
            </button>
            <i className="h-2.5 w-2.5 shrink-0 bg-[#ab9778]" />
            <span className="ml-3 w-[47px] shrink-0">Comp 1</span>
            <Svg w={9} h={9}>
              <path d="M0 1.500h9M0 4.500h9M0 7.500h9" />
            </Svg>
          </div>
        </nav>
        <TimelineControls />
        <div className="flex flex-1 flex-col border-r border-black bg-[#262626]">
          <ColumnHeader />
          <LayerRow />
          {rows.map((row) => (
            <PropertyRow key={row.label} row={row} />
          ))}
        </div>
      </div>
      <Tracks />
    </section>
  )
}

function Footer() {
  const cell = 'flex h-4 w-4 items-center justify-center'
  return (
    <footer className="flex h-[17px] items-center border-t border-black bg-[#232323] text-[#b0b0b0]">
      <div className="flex w-[698px] shrink-0 gap-0.5 pl-[3px]">
        <button type="button" aria-label="Layer switches" className={clsx(cell, 'bg-[#1a1a1a] text-[#2d8ceb]')}>
          <Svg w={12} h={12}>
            <path d="M2.500 7.500h-2v-7h6v2M4.500 9.500h-2v-7h6v2" />
            <rect x="4.500" y="4.500" width="6.500" height="6.500" strokeWidth="1.200" />
            <path d="M7.700 6.500v2.500M6.500 7.700h2.500" />
          </Svg>
        </button>
        <button type="button" aria-label="Transfer controls" className={clsx(cell, 'bg-[#1a1a1a] text-[#2d8ceb]')}>
          <Svg w={12} h={12}>
            <circle cx="4.500" cy="4.500" r="3.800" strokeWidth="1.200" />
            <rect x="4.500" y="4.500" width="6.500" height="6" strokeWidth="1.200" />
          </Svg>
        </button>
        <button type="button" aria-label="In and out panes" className={cell}>
          <Svg w={12} h={12}>
            <path d="M3 0h6v12H3z" fill="#777" stroke="none" />
            <path d="M4 .5H2.500V5L.5 6l2 1v4.500H4M8 .5h1.500V5l2 1-2 1v4.500H8" strokeWidth="1.300" />
          </Svg>
        </button>
      </div>
      <Svg w={10} h={4} className="ml-1.5">
        <path d="M0 4l3-2.500L4 2.500 6 0l4 4z" fill="currentColor" stroke="none" />
      </Svg>
      <input
        type="range"
        aria-label="Timeline zoom"
        defaultValue={0}
        className="ml-[11px] h-0.5 w-12 appearance-none bg-[#3a3a3a] [&::-webkit-slider-thumb]:h-[10px] [&::-webkit-slider-thumb]:w-[10px] [&::-webkit-slider-thumb]:appearance-none [&::-webkit-slider-thumb]:rounded-full [&::-webkit-slider-thumb]:border-2 [&::-webkit-slider-thumb]:border-[#9a9a9a] [&::-webkit-slider-thumb]:bg-[#232323]"
      />
      <Svg w={17} h={7} className="ml-3">
        <path d="M0 7l4.500-4.500L6.500 4.500 10.500 0 17 7z" fill="currentColor" stroke="none" />
      </Svg>
    </footer>
  )
}

/* red boxes and arrows drawn over the workspace */
function Annotations() {
  return (
    <svg viewBox="0 0 1346 829" className="pointer-events-none absolute left-0 top-0 h-[829px] w-[1346px]" aria-hidden="true">
      <g fill="none" stroke="#ed1c24" strokeWidth="3">
        <rect x="791.500" y="56.500" width="111" height="71" />
        <rect x="122.500" y="552.500" width="213" height="38" />
        <rect x="139.500" y="689.500" width="187" height="42" />
      </g>
      <g fill="#ed1c24">
        <path d="M147 282L149 281L253 496.500L258 495V519L239 503.500L243.500 501z" />
        <path d="M392 642L790.500 180.500L784 178L807 168L801 192L797.500 186.500L393.500 643.500z" />
      </g>
    </svg>
  )
}

function Watermark() {
  return (
    <div className="absolute bottom-[5px] right-[5px] flex h-[54px] w-[159px] items-center gap-0.5 bg-white pl-[17px]">
      <Svg w={36} h={36}>
        <g stroke="none">
          <path d="M0 0h36v15L25 5 18 12 11 5 0 16z" fill="#0f4068" />
          <path d="M0 22L11 12l3 3L0 28zM36 22L25 12l-3 3 14 13z" fill="#c00d12" />
          <path d="M0 36L18 18l18 18z" fill="#c90d12" />
          <rect x="15" y="27" width="5" height="4" fill="#fff" />
        </g>
      </Svg>
      <div>
        <div className="pt-1 font-['Noto_Sans_CJK_SC',sans-serif] text-[20px] font-black leading-6 text-[#0b4fae]">晓枫资讯</div>
        <div className="pl-0.5 font-['DejaVu_Sans_Mono',monospace] text-[10px] font-bold leading-3 text-[#f07a1c]">bbs.yzwlo.com</div>
      </div>
    </div>
  )
}

export default function App() {
  return (
    <div className="relative flex min-h-screen flex-col overflow-hidden bg-[#161616] font-['Noto_Sans',sans-serif]">
      <div className="mb-1 flex h-[399px] gap-1">
        <section className="w-[359px] shrink-0 bg-[#232323]" />
        <Viewer />
        <EffectsList />
      </div>
      <Timeline />
      <Footer />
      <Annotations />
      <Watermark />
    </div>
  )
}
